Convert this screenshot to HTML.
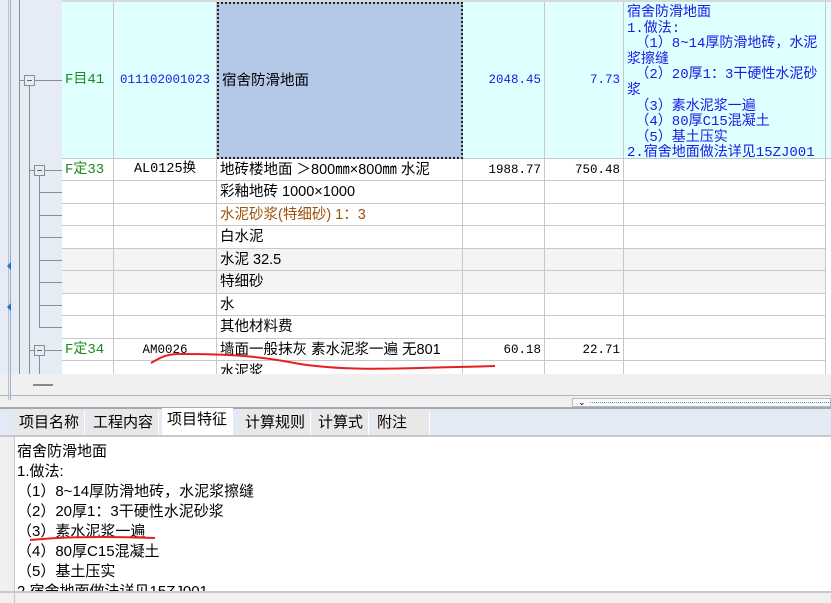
<!DOCTYPE html>
<html><head><meta charset="utf-8"><style>
*{margin:0;padding:0;box-sizing:border-box}
body{width:831px;height:603px;overflow:hidden;background:#f0f0f0;font-family:"Liberation Sans","Noto Sans CJK SC",sans-serif;font-size:14.5px;color:#000;position:relative}
.a{position:absolute}
.c{position:absolute;border-right:1px solid #c8c8c8;border-bottom:1px solid #c8c8c8;white-space:nowrap;overflow:hidden;line-height:22px;padding:0 3px}
.m{font-family:"Liberation Mono","Noto Sans CJK SC",monospace;font-size:12.5px}
.g{color:#1a8a1a}.r{text-align:right}.ce{text-align:center}
.ln{position:absolute;background:#8c8c8c}
.box{position:absolute;width:11px;height:11px;border:1px solid #8c8c8c;background:#e6ecf5}
.box:after{content:"";position:absolute;left:2px;top:4px;width:5px;height:1px;background:#666}
.tab{position:absolute;top:411px;height:24px;line-height:24px;font-size:15px;padding:0 5px;background:#e8e8e8;border-right:1px solid #fff}
</style></head><body>
<div class="a" style="left:0;top:0;width:831px;height:375px;background:#fff"></div>
<div class="a" style="left:0;top:0;width:62px;height:375px;background:#e6ecf5"></div>
<div class="ln" style="left:8px;top:0;width:1px;height:400px;background:#b8c0cc"></div>
<div class="ln" style="left:10px;top:0;width:1px;height:400px;background:#8fb0d8"></div>
<div class="ln" style="left:19px;top:0;width:1px;height:375px"></div>
<div class="ln" style="left:19px;top:80px;width:43px;height:1px"></div>
<div class="ln" style="left:29px;top:85px;width:1px;height:290px"></div>
<div class="ln" style="left:29px;top:170px;width:33px;height:1px"></div>
<div class="ln" style="left:39px;top:175px;width:1px;height:153px"></div>
<div class="ln" style="left:39px;top:192px;width:23px;height:1px"></div>
<div class="ln" style="left:39px;top:215px;width:23px;height:1px"></div>
<div class="ln" style="left:39px;top:237px;width:23px;height:1px"></div>
<div class="ln" style="left:39px;top:260px;width:23px;height:1px"></div>
<div class="ln" style="left:39px;top:282px;width:23px;height:1px"></div>
<div class="ln" style="left:39px;top:305px;width:23px;height:1px"></div>
<div class="ln" style="left:39px;top:327px;width:23px;height:1px"></div>
<div class="ln" style="left:29px;top:350px;width:33px;height:1px"></div>
<div class="ln" style="left:39px;top:355px;width:1px;height:20px"></div>
<div class="box" style="left:24px;top:75px"></div>
<div class="box" style="left:34px;top:165px"></div>
<div class="box" style="left:34px;top:345px"></div>

<div class="a" style="left:62px;top:0;width:769px;height:2px;background:#d8d8d8"></div>
<div class="c m g" style="left:62px;top:2px;width:52px;height:157px;line-height:156px;background:#e0ffff;font-size:14px">F目41</div>
<div class="c m ce" style="left:114px;top:2px;width:103px;height:157px;line-height:156px;background:#e0ffff;color:#1a1ae6">011102001023</div>
<div class="c" style="left:217px;top:2px;width:246px;height:157px;line-height:154px;background:#b4c8e8;border:2px dotted #222">宿舍防滑地面</div>
<div class="c m r" style="left:463px;top:2px;width:82px;height:157px;line-height:156px;background:#e0ffff;color:#1a1ae6">2048.45</div>
<div class="c m r" style="left:545px;top:2px;width:79px;height:157px;line-height:156px;background:#e0ffff;color:#1a1ae6">7.73</div>
<div class="c m" style="left:624px;top:2px;width:202px;height:157px;background:#e0ffff;color:#1a1ae6;line-height:15.6px;white-space:normal;word-break:break-all;padding-top:4px;font-size:14px">宿舍防滑地面<br>1.做法:<br>&nbsp;（1）8~14厚防滑地砖，水泥浆擦缝<br>&nbsp;（2）20厚1：3干硬性水泥砂浆<br>&nbsp;（3）素水泥浆一遍<br>&nbsp;（4）80厚C15混凝土<br>&nbsp;（5）基土压实<br>2.宿舍地面做法详见15ZJ001</div>
<div class="c" style="left:826px;top:2px;width:5px;height:157px;background:#e0ffff"></div>

<div class="c m g" style="left:62px;top:159px;width:52px;height:22px;font-size:14px">F定33</div>
<div class="c m ce" style="left:114px;top:159px;width:103px;height:22px;font-size:13.5px">AL0125换</div>
<div class="c" style="left:217px;top:159px;width:246px;height:22px">地砖楼地面 ＞800㎜×800㎜ 水泥</div>
<div class="c m r" style="left:463px;top:159px;width:82px;height:22px">1988.77</div>
<div class="c m r" style="left:545px;top:159px;width:79px;height:22px">750.48</div>
<div class="c" style="left:624px;top:159px;width:202px;height:22px"></div>

<div class="c" style="left:62px;top:181px;width:52px;height:23px"></div><div class="c" style="left:114px;top:181px;width:103px;height:23px"></div><div class="c" style="left:217px;top:181px;width:246px;height:23px">彩釉地砖 1000×1000</div><div class="c" style="left:463px;top:181px;width:82px;height:23px"></div><div class="c" style="left:545px;top:181px;width:79px;height:23px"></div><div class="c" style="left:624px;top:181px;width:202px;height:23px"></div>
<div class="c" style="left:62px;top:204px;width:52px;height:22px"></div><div class="c" style="left:114px;top:204px;width:103px;height:22px"></div><div class="c" style="left:217px;top:204px;width:246px;height:22px;color:#a0520a">水泥砂浆(特细砂) 1：3</div><div class="c" style="left:463px;top:204px;width:82px;height:22px"></div><div class="c" style="left:545px;top:204px;width:79px;height:22px"></div><div class="c" style="left:624px;top:204px;width:202px;height:22px"></div>
<div class="c" style="left:62px;top:226px;width:52px;height:23px"></div><div class="c" style="left:114px;top:226px;width:103px;height:23px"></div><div class="c" style="left:217px;top:226px;width:246px;height:23px">白水泥</div><div class="c" style="left:463px;top:226px;width:82px;height:23px"></div><div class="c" style="left:545px;top:226px;width:79px;height:23px"></div><div class="c" style="left:624px;top:226px;width:202px;height:23px"></div>
<div class="a" style="left:62px;top:249px;width:764px;height:45px;background:#f4f4f4"></div>
<div class="c" style="left:62px;top:249px;width:52px;height:22px"></div><div class="c" style="left:114px;top:249px;width:103px;height:22px"></div><div class="c" style="left:217px;top:249px;width:246px;height:22px">水泥 32.5</div><div class="c" style="left:463px;top:249px;width:82px;height:22px"></div><div class="c" style="left:545px;top:249px;width:79px;height:22px"></div><div class="c" style="left:624px;top:249px;width:202px;height:22px"></div>
<div class="c" style="left:62px;top:271px;width:52px;height:23px"></div><div class="c" style="left:114px;top:271px;width:103px;height:23px"></div><div class="c" style="left:217px;top:271px;width:246px;height:23px">特细砂</div><div class="c" style="left:463px;top:271px;width:82px;height:23px"></div><div class="c" style="left:545px;top:271px;width:79px;height:23px"></div><div class="c" style="left:624px;top:271px;width:202px;height:23px"></div>
<div class="c" style="left:62px;top:294px;width:52px;height:22px"></div><div class="c" style="left:114px;top:294px;width:103px;height:22px"></div><div class="c" style="left:217px;top:294px;width:246px;height:22px">水</div><div class="c" style="left:463px;top:294px;width:82px;height:22px"></div><div class="c" style="left:545px;top:294px;width:79px;height:22px"></div><div class="c" style="left:624px;top:294px;width:202px;height:22px"></div>
<div class="c" style="left:62px;top:316px;width:52px;height:23px"></div><div class="c" style="left:114px;top:316px;width:103px;height:23px"></div><div class="c" style="left:217px;top:316px;width:246px;height:23px">其他材料费</div><div class="c" style="left:463px;top:316px;width:82px;height:23px"></div><div class="c" style="left:545px;top:316px;width:79px;height:23px"></div><div class="c" style="left:624px;top:316px;width:202px;height:23px"></div>
<div class="c m g" style="left:62px;top:339px;width:52px;height:22px;font-size:14px">F定34</div>
<div class="c m ce" style="left:114px;top:339px;width:103px;height:22px">AM0026</div>
<div class="c" style="left:217px;top:339px;width:246px;height:22px">墙面一般抹灰 素水泥浆一遍 无801</div>
<div class="c m r" style="left:463px;top:339px;width:82px;height:22px">60.18</div>
<div class="c m r" style="left:545px;top:339px;width:79px;height:22px">22.71</div>
<div class="c" style="left:624px;top:339px;width:202px;height:22px"></div>
<div class="c" style="left:62px;top:361px;width:52px;height:22px"></div><div class="c" style="left:114px;top:361px;width:103px;height:22px"></div><div class="c" style="left:217px;top:361px;width:246px;height:22px">水泥浆</div><div class="c" style="left:463px;top:361px;width:82px;height:22px"></div><div class="c" style="left:545px;top:361px;width:79px;height:22px"></div><div class="c" style="left:624px;top:361px;width:202px;height:22px"></div>

<div class="a" style="left:11px;top:374px;width:820px;height:22px;background:#f0f0f0"></div>
<div class="a" style="left:33px;top:384px;width:20px;height:2px;background:#888"></div>
<div class="a" style="left:0;top:395px;width:831px;height:1px;background:#a8b8cc"></div>
<div class="a" style="left:572px;top:398px;width:259px;height:9px;border:1px solid #bbb;background:#fafafa"></div>
<div class="a" style="left:590px;top:402px;width:241px;height:1px;border-top:1px dotted #4a9ae0"></div>
<div class="a" style="left:578px;top:397px;font-size:9px;line-height:10px">&#8964;</div>
<div class="a" style="left:0;top:407px;width:831px;height:2px;background:#a8a8a8"></div>
<div class="a" style="left:0;top:409px;width:831px;height:27px;background:#e2eaf5"></div>
<div class="tab" style="left:14px">项目名称</div>
<div class="tab" style="left:88px">工程内容</div>
<div class="tab" style="left:162px;top:408px;height:28px;background:#fff">项目特征</div>
<div class="tab" style="left:240px">计算规则</div>
<div class="tab" style="left:313px">计算式</div>
<div class="tab" style="left:372px;width:58px">附注</div>
<div class="a" style="left:0;top:435px;width:831px;height:2px;background:#c8c8c8"></div>
<div class="a" style="left:14px;top:437px;width:817px;height:154px;background:#fff;font-size:15px;line-height:20px;padding:5px 3px;white-space:nowrap;overflow:hidden">宿舍防滑地面<br>1.做法:<br>（1）8~14厚防滑地砖，水泥浆擦缝<br>（2）20厚1：3干硬性水泥砂浆<br>（3）素水泥浆一遍<br>（4）80厚C15混凝土<br>（5）基土压实<br>2.宿舍地面做法详见15ZJ001</div>
<div class="a" style="left:0;top:591px;width:831px;height:2px;background:#c8c8c8"></div>
<div class="a" style="left:14px;top:437px;width:1px;height:166px;background:#c8c8c8"></div>
<div class="a" style="left:3px;top:262px;width:0;height:0;border:4px solid transparent;border-right-color:#1e6fd0"></div>
<div class="a" style="left:3px;top:303px;width:0;height:0;border:4px solid transparent;border-right-color:#1e6fd0"></div>

<svg class="a" style="left:0;top:0" width="831" height="603">
<path d="M151 363 C160 358,165 354,180 354 C230 354,260 356,300 364 C340 370,380 369,420 368 C450 367,470 367,495 366" stroke="#e52020" stroke-width="2" fill="none"/>
<path d="M30 540 C60 537,100 536,155 538" stroke="#e52020" stroke-width="2" fill="none"/>
</svg>
</body></html>
